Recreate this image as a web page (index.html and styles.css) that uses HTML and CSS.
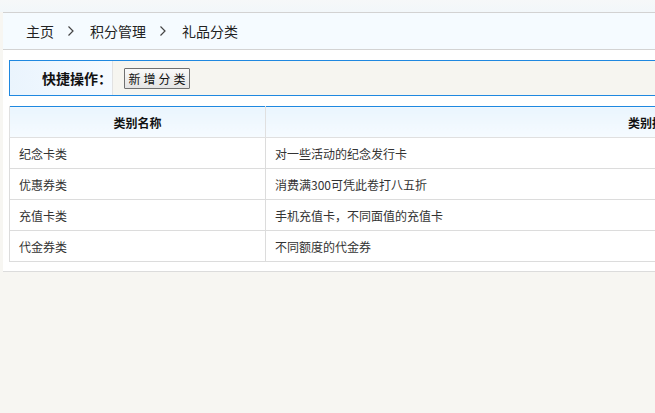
FILE: index.html
```html
<!DOCTYPE html>
<html lang="zh-CN">
<head>
<meta charset="utf-8">
<title>礼品分类</title>
<link rel="stylesheet" href="styles.css">
</head>
<body>
<div class="wrap">
  <div class="panel">
    <div class="crumb">
      <span class="crumb-item">主页</span>
      <svg class="sep" width="8" height="12" viewBox="0 0 8 12"><path d="M1.5 1.5 L6 6 L1.5 10.5" fill="none" stroke="#444" stroke-width="1.2"/></svg>
      <span class="crumb-item">积分管理</span>
      <svg class="sep" width="8" height="12" viewBox="0 0 8 12"><path d="M1.5 1.5 L6 6 L1.5 10.5" fill="none" stroke="#444" stroke-width="1.2"/></svg>
      <span class="crumb-item">礼品分类</span>
    </div>
    <div class="quick">
      <div class="quick-label">快捷操作：</div>
      <div class="quick-body"><button class="btn" type="button">新增分类</button></div>
    </div>
    <table class="grid">
      <thead>
        <tr><th class="col-name">类别名称</th><th>类别描述</th></tr>
      </thead>
      <tbody>
        <tr><td>纪念卡类</td><td>对一些活动的纪念发行卡</td></tr>
        <tr><td>优惠券类</td><td>消费满300可凭此卷打八五折</td></tr>
        <tr><td>充值卡类</td><td>手机充值卡，不同面值的充值卡</td></tr>
        <tr><td>代金券类</td><td>不同额度的代金券</td></tr>
      </tbody>
    </table>
  </div>
</div>
</body>
</html>
```
FILE: styles.css
```css
html, body {
  margin: 0;
  padding: 0;
  overflow: hidden;
}
body {
  background: #f7f6f2;
  font-family: "Noto Sans CJK SC", "Liberation Sans", sans-serif;
  color: #333;
  width: 655px;
  height: 413px;
}
.wrap {
  padding: 12px 0 0 3px;
  background: linear-gradient(#f6f8f9, #f2f7fa) top / 100% 12px no-repeat;
}
.panel {
  width: 1100px;
  background: #fff;
  border-top: 1px solid #d2d2d2;
  border-bottom: 1px solid #dcdcdc;
  padding-bottom: 9px;
}
.crumb {
  height: 36px;
  background: #f5fbff;
  border-bottom: 1px solid #d3d3d3;
  display: flex;
  align-items: center;
  padding-left: 23px;
  font-size: 14px;
  color: #222;
}
.sep {
  margin: 0 15px 0 13px;
}
.quick {
  margin: 10px 0 0 6px;
  width: 1040px;
  height: 34px;
  border: 1px solid #1f88e0;
  display: flex;
  background: #f6f5f0;
}
.quick-label {
  width: 103px;
  box-sizing: border-box;
  padding-right: 0;
  text-align: right;
  font-size: 14px;
  font-weight: bold;
  color: #111;
  line-height: 34px;
  background: linear-gradient(90deg, #eaf4fd, #f5faff);
  border-right: 1px solid #e2e2e2;
}
.quick-body {
  display: flex;
  align-items: center;
  padding-left: 11px;
}
.btn {
  height: 21px;
  width: 66px;
  padding: 0;
  font-family: "Noto Sans CJK SC", sans-serif;
  font-size: 12px;
  letter-spacing: 3px;
  text-indent: 3px;
  color: #111;
  border: 1px solid #707070;
  border-radius: 1px;
  background: linear-gradient(#fafafa, #e4e4e4);
  line-height: 19px;
}
.grid {
  margin: 10px 0 0 6px;
  width: 1030px;
  border-collapse: collapse;
  border-top: 1px solid #1f88e0;
  font-size: 12px;
}
.grid th {
  height: 30px;
  padding: 0;
  font-weight: bold;
  color: #111;
  background: linear-gradient(#eaf5fe, #f6fbff);
  border: 1px solid #e0e0e0;
  border-top: none;
  text-align: center;
}
.grid .col-name {
  width: 255px;
}
.grid td {
  height: 30px;
  padding: 0 0 0 9px;
  border: 1px solid #dcdcdc;
  color: #333;
}
```
